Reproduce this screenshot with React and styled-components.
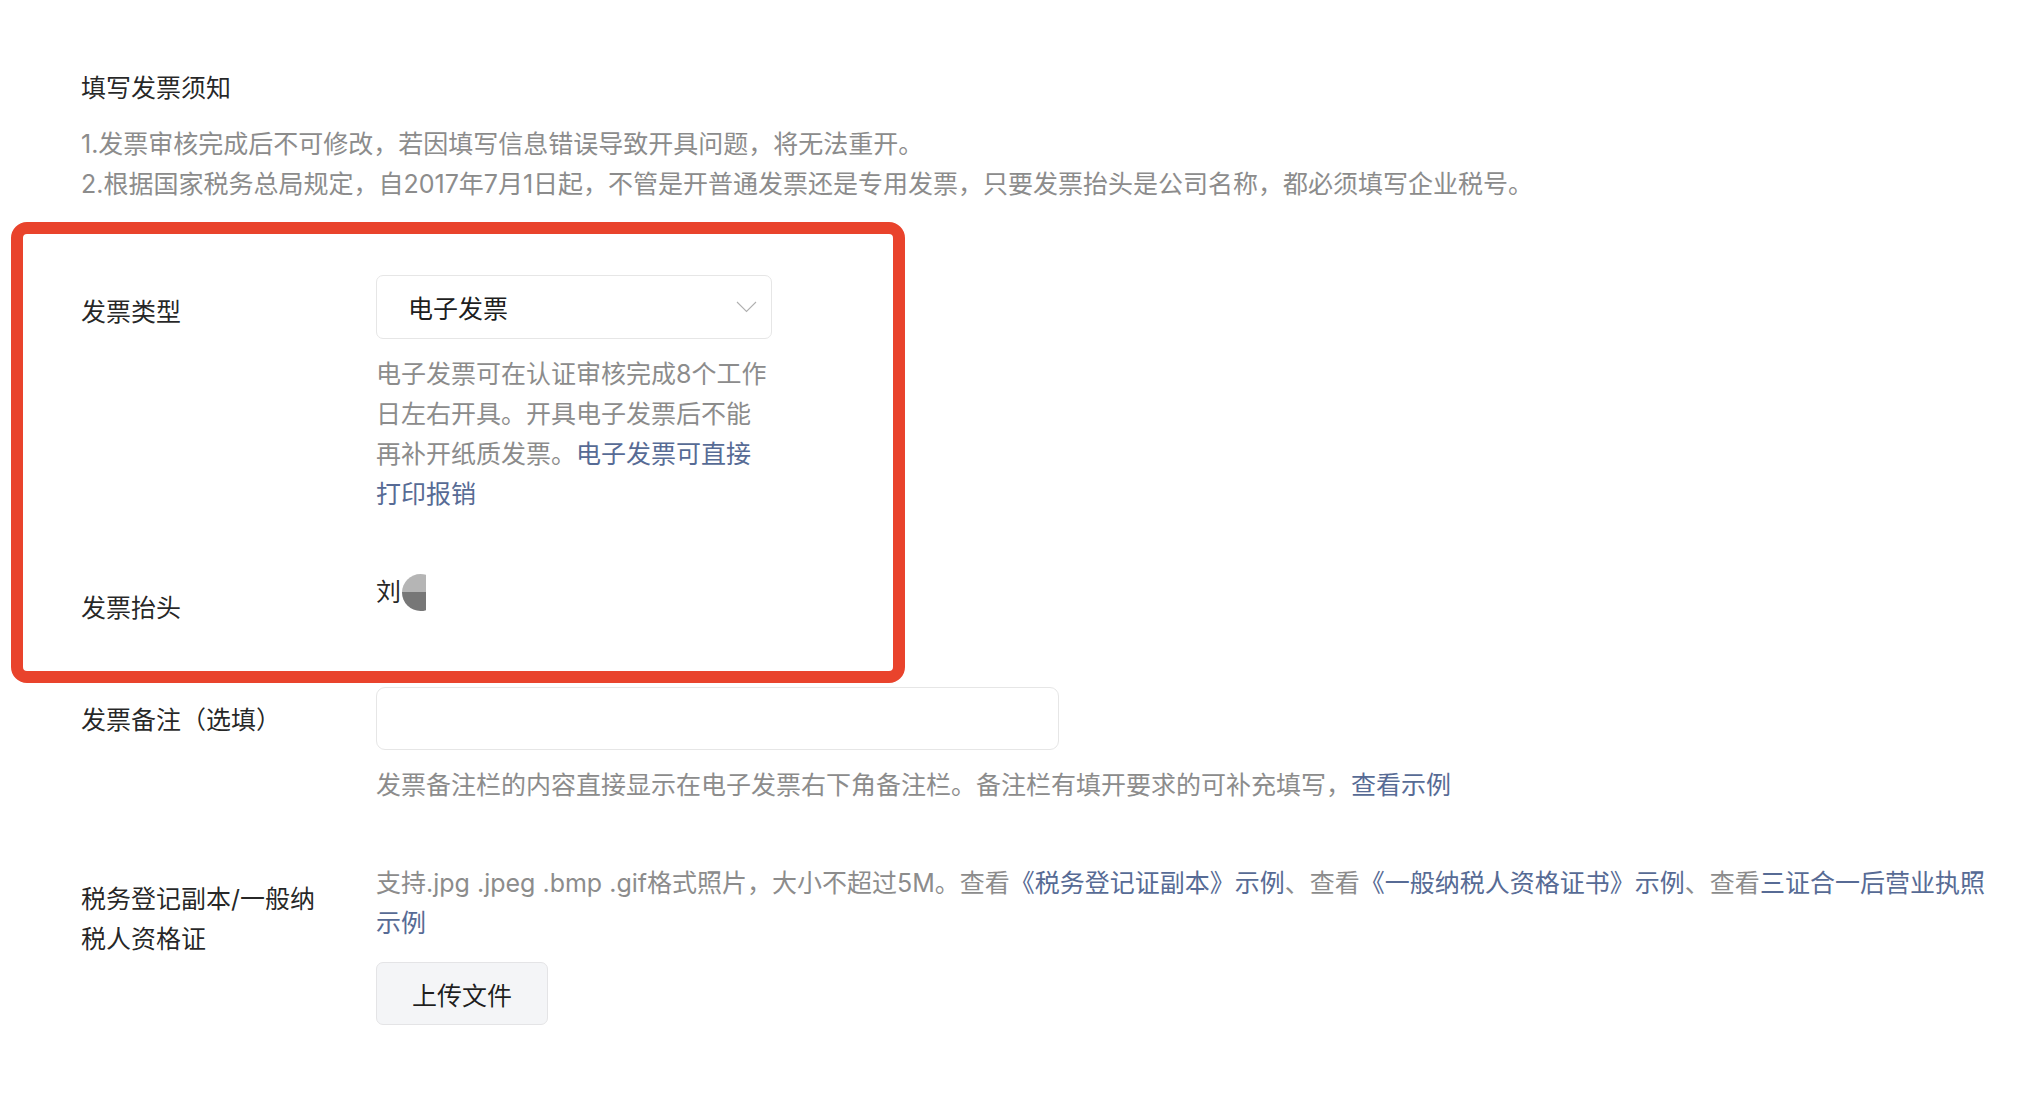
import React from "react";
import styled, { createGlobalStyle } from "styled-components";

const GlobalStyle = createGlobalStyle`
  html, body { margin: 0; padding: 0; background: #ffffff; }
  body {
    font-family: "Inter", "Noto Sans CJK SC", sans-serif;
    font-size: 25px;
    color: rgba(0, 0, 0, 0.86);
  }
  * { box-sizing: border-box; }
`;

const Page = styled.div`
  width: 2028px;
  padding: 68px 30px 60px 81px;
  display: flex;
  flex-direction: column;
`;

const Title = styled.div`
  line-height: 40px;
  color: rgba(0, 0, 0, 0.86);
`;

const Notice = styled.div`
  margin-top: 16px;
  line-height: 40px;
  color: #8c8c8c;
`;

const Highlight = styled.div`
  margin: 18px 0 0 -70px;
  width: 894px;
  border: 12px solid #e9432c;
  border-radius: 16px;
  padding: 41px 0 43px 58px;
  display: flex;
  flex-direction: column;
  gap: 58px;
`;

const Row = styled.div`
  display: grid;
  grid-template-columns: 295px 1fr;
  margin-top: ${(p) => p.$top || 0}px;
`;

const Label = styled.div`
  max-width: 245px;
  padding-top: ${(p) => p.$pad ?? 16}px;
  line-height: 40px;
  color: rgba(0, 0, 0, 0.86);
`;

const Content = styled.div`
  display: flex;
  flex-direction: column;
  align-items: flex-start;
`;

const Select = styled.div`
  width: 396px;
  height: 64px;
  border: 1px solid #e6e6e6;
  border-radius: 7px;
  padding: 0 14px 0 31px;
  display: flex;
  align-items: center;
  justify-content: space-between;
  color: rgba(0, 0, 0, 0.9);
`;

const Help = styled.div`
  margin-top: ${(p) => p.$top ?? 15}px;
  width: ${(p) => p.$w || "auto"};
  line-height: 40px;
  color: #8c8c8c;
`;

const Link = styled.span`
  color: #576b95;
`;

const TitleValue = styled.div`
  display: flex;
  align-items: center;
  height: 40px;
  line-height: 40px;
`;

const AvatarClip = styled.span`
  display: inline-block;
  width: 24px;
  height: 37px;
  overflow: hidden;
  margin-left: 1px;
`;

const AvatarDisc = styled.span`
  display: block;
  width: 37px;
  height: 37px;
  border-radius: 50%;
  background: linear-gradient(#b5b5b5 0 50%, #777777 50% 100%);
`;

const Input = styled.div`
  width: 683px;
  height: 63px;
  border: 1px solid #e6e6e6;
  border-radius: 9px;
`;

const UploadButton = styled.button`
  margin-top: 19px;
  width: 172px;
  height: 63px;
  border: 1px solid #e4e4e6;
  border-radius: 7px;
  background: #f4f5f7;
  font: inherit;
  font-size: 25px;
  color: rgba(0, 0, 0, 0.88);
  cursor: pointer;
`;

const Chevron = () => (
  <svg width="21" height="12" viewBox="0 0 21 12" fill="none">
    <path d="M1 1 L10.5 10.5 L20 1" stroke="#b0b0b0" strokeWidth="1.1" />
  </svg>
);

export default function App() {
  return (
    <>
      <GlobalStyle />
      <Page>
        <Title>填写发票须知</Title>
        <Notice>
          1.发票审核完成后不可修改，若因填写信息错误导致开具问题，将无法重开。
          <br />
          2.根据国家税务总局规定，自2017年7月1日起，不管是开普通发票还是专用发票，只要发票抬头是公司名称，都必须填写企业税号。
        </Notice>

        <Highlight>
          <Row>
            <Label $pad={17}>发票类型</Label>
            <Content>
              <Select>
                <span>电子发票</span>
                <Chevron />
              </Select>
              <Help $w="396px">
                电子发票可在认证审核完成8个工作日左右开具。开具电子发票后不能再补开纸质发票。
                <Link>电子发票可直接打印报销</Link>
              </Help>
            </Content>
          </Row>
          <Row>
            <Label>发票抬头</Label>
            <Content>
              <TitleValue>
                <span>刘</span>
                <AvatarClip>
                  <AvatarDisc />
                </AvatarClip>
              </TitleValue>
            </Content>
          </Row>
        </Highlight>

        <Row $top={4}>
          <Label $pad={13}>发票备注（选填）</Label>
          <Content>
            <Input />
            <Help>
              发票备注栏的内容直接显示在电子发票右下角备注栏。备注栏有填开要求的可补充填写，
              <Link>查看示例</Link>
            </Help>
          </Content>
        </Row>

        <Row $top={58}>
          <Label>税务登记副本/一般纳税人资格证</Label>
          <Content>
            <Help $top={0}>
              支持.jpg .jpeg .bmp .gif格式照片，大小不超过5M。查看
              <Link>《税务登记证副本》示例</Link>、查看
              <Link>《一般纳税人资格证书》示例</Link>、查看
              <Link>三证合一后营业执照示例</Link>
            </Help>
            <UploadButton>上传文件</UploadButton>
          </Content>
        </Row>
      </Page>
    </>
  );
}
